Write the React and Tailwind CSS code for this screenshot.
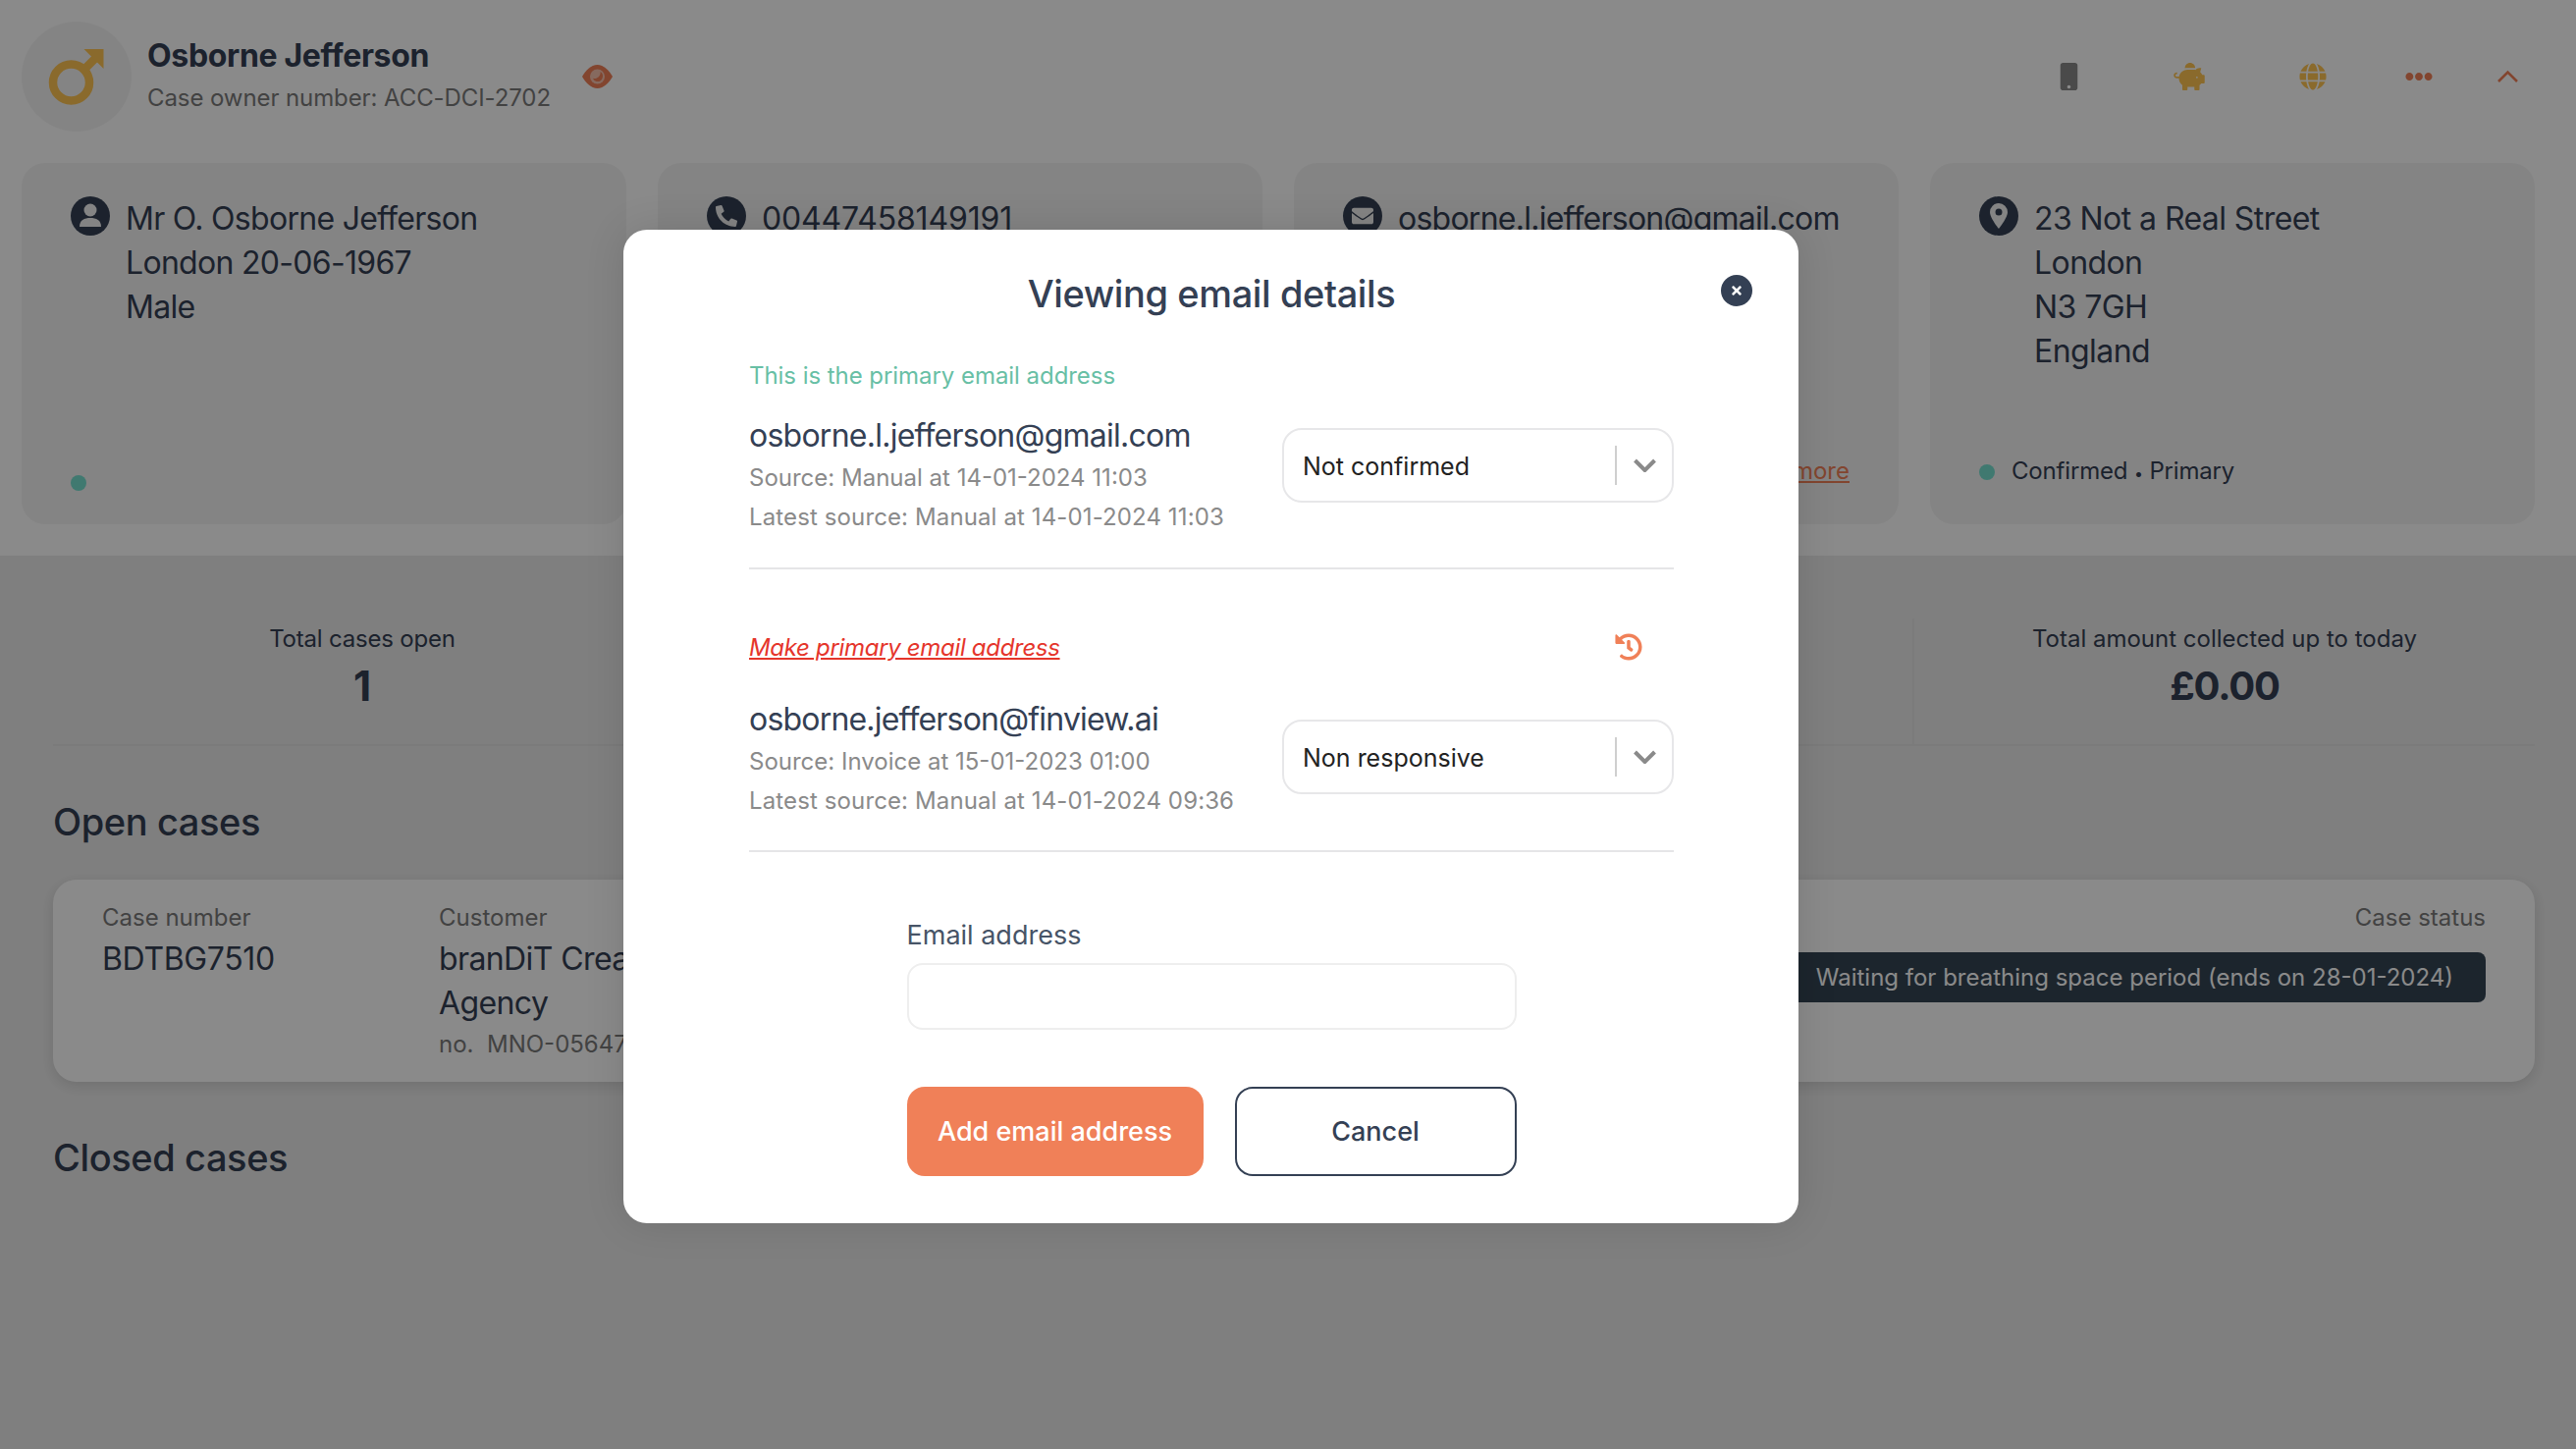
import React from "react";
import { FaMobile, FaPiggyBank, FaGlobe, FaEllipsisH, FaPhoneAlt, FaEnvelope, FaHistory, FaTimes } from "react-icons/fa";

const font = { fontFamily: "Inter, 'Liberation Sans', sans-serif" };

function IconCircle({ children }) {
  return <span className="flex h-[40px] w-[40px] shrink-0 items-center justify-center rounded-full bg-[#344054] text-[#f4f4f4]">{children}</span>;
}

function InfoCard({ icon, lines, footer, tracking = "tracking-[-0.7px]" }) {
  return (
    <div className="relative flex h-[368px] flex-col rounded-[24px] bg-[#f4f4f4] pl-[50px] pr-[32px] pt-[34px]">
      <div className="flex gap-[16px]">
        <IconCircle>{icon}</IconCircle>
        <div className={`text-[32px] leading-[45px] text-[#344054] ${tracking}`}>
          {lines.map((l) => <div key={l} className="whitespace-nowrap">{l}</div>)}
        </div>
      </div>
      {footer}
    </div>
  );
}

function Chevron() {
  return (
    <svg width="23" height="14" viewBox="0 0 23 14" fill="none" stroke="#8a8a8a" strokeWidth="4" strokeLinejoin="miter">
      <path d="M1.5 2l10 10 10-10" />
    </svg>
  );
}

function Select({ value, top }) {
  return (
    <div className={`flex h-[76px] w-[399px] shrink-0 items-center rounded-[20px] border-2 border-[#e7e7e9] pl-[19px] ${top}`}>
      <span className="flex-1 pt-[1px] text-[25px] leading-[36px] text-[#222222]">{value}</span>
      <span className="h-[40px] w-[2px] bg-[#cfcfcf]" />
      <span className="flex w-[56px] justify-center"><Chevron /></span>
    </div>
  );
}

function EmailRow({ email, source, latest, top, status, tracking }) {
  return (
    <div className="flex justify-between">
      <div className="whitespace-nowrap">
        <div className={`text-[32px] leading-[45px] text-[#344054] ${tracking}`}>{email}</div>
        <div className="mt-[1px] text-[24px] leading-[40px] text-[#8a8a8a]">{source}</div>
        <div className="text-[24px] leading-[40px] tracking-[0.12px] text-[#8a8a8a]">{latest}</div>
      </div>
      <Select value={status} top={top} />
    </div>
  );
}

function Stat({ label, value, last, valueClass = "text-[42px]", labelClass = "" }) {
  return (
    <div className={`flex h-[128px] flex-col items-center pt-[3px] ${last ? "" : "border-r-2 border-[#e3e3e3]"}`}>
      <div className={`text-[24px] leading-[36px] text-[#344054] ${labelClass}`}>{label}</div>
      <div className={`mt-[6px] font-bold leading-[48px] text-[#344054] ${valueClass}`}>{value}</div>
    </div>
  );
}

export default function App() {
  return (
    <div className="relative h-[1476px] w-[2624px] overflow-hidden bg-[#ebebeb]" style={font}>
      <div className="h-[566px] bg-white">
        <header className="flex h-[166px] items-start pl-[22px] pr-[59px] pt-[22px]">
          <div className="flex h-[112px] w-[112px] items-center justify-center rounded-full bg-[#f4f4f4]">
            <svg width="60" height="60" viewBox="0 0 60 60" fill="none" stroke="#ffc452">
              <circle cx="24.5" cy="36" r="18.5" strokeWidth="8.5" />
              <path d="M37.5 23l14-14" strokeWidth="8.5" />
              <path d="M37.5 2h20v20z" fill="#ffc452" stroke="none" strokeLinejoin="round" />
            </svg>
          </div>
          <div className="ml-[16px] whitespace-nowrap">
            <div className="mt-[14px] text-[32px] font-bold leading-[42px] tracking-[-0.35px] text-[#344054]">Osborne Jefferson</div>
            <div className="mt-[1px] text-[24px] leading-[42px] tracking-[-0.09px] text-[#7b7b7b]">Case owner number: ACC-DCI-2702</div>
          </div>
          <svg className="ml-[32px] mt-[44px]" width="31" height="24" viewBox="0 0 31 24">
            <path fill="#f08058" d="M15.5 0C22 0 27.5 6 31 12 27.5 18 22 24 15.5 24 9 24 3.5 18 0 12 3.5 6 9 0 15.5 0z" />
            <circle cx="15.5" cy="12" r="7.5" fill="#f8c4b0" />
            <path fill="#f08058" d="M18.5 7a5.5 5.5 0 0 1-4 10 5 5 0 0 1-3.6-3.2A6 6 0 0 0 18.5 7z" />
          </svg>
          <div className="ml-auto mt-[42px] flex h-[28px] items-center">
            <FaMobile className="h-[28px] w-[19px] text-[#8a8a8a]" />
            <FaPiggyBank className="ml-[97px] h-[28px] w-[32px] text-[#ffc452]" />
            <FaGlobe className="ml-[96px] h-[28px] w-[28px] text-[#ffc452]" />
            <FaEllipsisH className="ml-[80px] h-[28px] w-[28px] text-[#f08058]" />
            <svg className="ml-[66px]" width="21" height="14" viewBox="0 0 21 14" fill="none" stroke="#f08058" strokeWidth="2.6"><path d="M1 12L10.5 2.5 20 12" /></svg>
          </div>
        </header>
        <div className="ml-[22px] grid w-[2560px] grid-cols-4 gap-[32px]">
          <InfoCard
            icon={<svg width="26" height="28" viewBox="0 0 26 28" fill="#f4f4f4"><circle cx="13" cy="8" r="6.5" /><path d="M2 25c0-7 5-9 11-9s11 2 11 9z" /></svg>}
            lines={["Mr O. Osborne Jefferson", "London 20-06-1967", "Male"]}
            footer={<span className="absolute bottom-[34px] left-[50px] h-[16px] w-[16px] rounded-full bg-[#76e0d0]" />}
          />
          <InfoCard
            icon={<FaPhoneAlt className="h-[22px] w-[22px]" />}
            lines={["00447458149191"]}
            tracking="tracking-[-0.16px]"
          />
          <InfoCard
            icon={<FaEnvelope className="h-[22px] w-[22px]" />}
            lines={["osborne.l.jefferson@gmail.com"]}
            tracking="tracking-[-0.75px]"
            footer={<span className="absolute bottom-[36px] right-[50px] text-[24px] leading-[36px] text-[#f08058] underline">more</span>}
          />
          <InfoCard
            icon={<svg width="20" height="28" viewBox="0 0 20 28"><path fillRule="evenodd" fill="#f4f4f4" d="M10 1a9 9 0 0 1 9 9c0 6-9 17-9 17S1 16 1 10a9 9 0 0 1 9-9zm0 5.5a3.5 3.5 0 1 0 0 7 3.5 3.5 0 0 0 0-7z" /></svg>}
            lines={["23 Not a Real Street", "London", "N3 7GH", "England"]}
            tracking="tracking-[-0.57px]"
            footer={
              <div className="absolute bottom-[35px] left-[50px] flex h-[36px] items-center gap-[17px] text-[24px] leading-[36px] tracking-[-0.17px] text-[#344054]">
                <span className="h-[16px] w-[16px] rounded-full bg-[#76e0d0]" />
                <span>Confirmed <span className="text-[16px]">•</span> Primary</span>
              </div>
            }
          />
        </div>
      </div>

      <main className="ml-[54px] w-[2528px]">
        <div className="mt-[64px] grid grid-cols-4 border-b-2 border-[#e3e3e3]">
          <Stat label="Total cases open" value="1" labelClass="tracking-[-0.2px]" />
          <Stat label="" value="" />
          <Stat label="" value="" />
          <Stat label="Total amount collected up to today" value="£0.00" last valueClass="text-[40px] tracking-[-1.2px]" />
        </div>
        <h2 className="mt-[53px] text-[38px] font-medium leading-[48px] tracking-[-0.4px] text-[#344054]">Open cases</h2>
        <div className="mt-[35px] flex h-[206px] rounded-[24px] bg-white pl-[50px] pr-[50px] pt-[21px] shadow-[0_4px_14px_rgba(0,0,0,0.12)]">
          <div className="w-[343px]">
            <div className="text-[24px] leading-[36px] text-[#7b7b7b]">Case number</div>
            <div className="mt-[1px] text-[32px] leading-[45px] tracking-[-0.35px] text-[#344054]">BDTBG7510</div>
          </div>
          <div className="w-[360px]">
            <div className="text-[24px] leading-[36px] text-[#7b7b7b]">Customer</div>
            <div className="mt-[1px] text-[32px] leading-[45px] tracking-[-0.6px] text-[#344054]">branDiT Creative Agency</div>
            <div className="mt-[2px] text-[24px] leading-[36px] text-[#7b7b7b]">no.&nbsp;&nbsp;MNO-05647</div>
          </div>
          <div className="ml-auto flex flex-col items-end">
            <div className="text-[24px] leading-[36px] text-[#7b7b7b]">Case status</div>
            <div className="mt-[17px] flex h-[51px] items-center whitespace-nowrap rounded-[8px] bg-[#344554] px-[33px] pt-[1px] text-[24px] text-white">Waiting for breathing space period (ends on 28-01-2024)</div>
          </div>
        </div>
        <h2 className="mt-[53px] text-[38px] font-medium leading-[48px] tracking-[-0.4px] text-[#344054]">Closed cases</h2>
      </main>

      {/* Backdrop */}
      <div className="absolute inset-0 bg-black/46" />

      {/* Modal */}
      <div className="absolute left-[635px] top-[234px] h-[1012px] w-[1197px] rounded-[24px] bg-white pl-[128px] pr-[127px] pt-[37px] shadow-[0_0_40px_rgba(0,0,0,0.12)]">
        <button className="absolute left-[1118px] top-[46px] flex h-[32px] w-[32px] items-center justify-center rounded-full bg-[#344054] text-white">
          <FaTimes className="h-[14px] w-[14px]" />
        </button>
        <h1 className="text-center text-[38px] font-medium leading-[56px] tracking-[-0.4px] text-[#344054]">Viewing email details</h1>
        <div className="mt-[38px] text-[24px] leading-[36px] tracking-[-0.05px] text-[#68bfa5]">This is the primary email address</div>
        <div className="mt-[20px]">
          <EmailRow email="osborne.l.jefferson@gmail.com" source="Source: Manual at 14-01-2024 11:03" latest="Latest source: Manual at 14-01-2024 11:03" status="Not confirmed" top="mt-[15px]" tracking="tracking-[-0.75px]" />
        </div>
        <div className="mt-[31px] h-[2px] bg-[#e5e5e7]" />
        <div className="mt-[62px] flex h-[36px] items-center justify-between pr-[32px]">
          <a className="text-[24px] italic leading-[36px] tracking-[-0.32px] text-[#e5352b] underline">Make primary email address</a>
          <FaHistory className="mb-[3px] h-[28px] w-[28px] text-[#f08058]" />
        </div>
        <div className="mt-[32px]">
          <EmailRow email="osborne.jefferson@finview.ai" source="Source: Invoice at 15-01-2023 01:00" latest="Latest source: Manual at 14-01-2024 09:36" status="Non responsive" top="mt-[23px]" tracking="tracking-[-0.8px]" />
        </div>
        <div className="mt-[30px] h-[2px] bg-[#e5e5e7]" />
        <div className="mx-auto w-[621px]">
          <label className="mt-[65px] block text-[27px] leading-[40px] text-[#475467]">Email address</label>
          <input className="mt-[8px] block h-[68px] w-full rounded-[16px] border-2 border-[#eeeeee] bg-white" />
          <div className="mt-[58px] flex gap-[32px]">
            <button className="h-[91px] w-[302px] rounded-[18px] bg-[#f08058] pt-[2px] text-[27px] font-medium text-white">Add email address</button>
            <button className="h-[91px] w-[287px] rounded-[18px] border-2 border-[#344054] pt-[2px] text-[27px] font-medium text-[#344054]">Cancel</button>
          </div>
        </div>
      </div>
    </div>
  );
}
